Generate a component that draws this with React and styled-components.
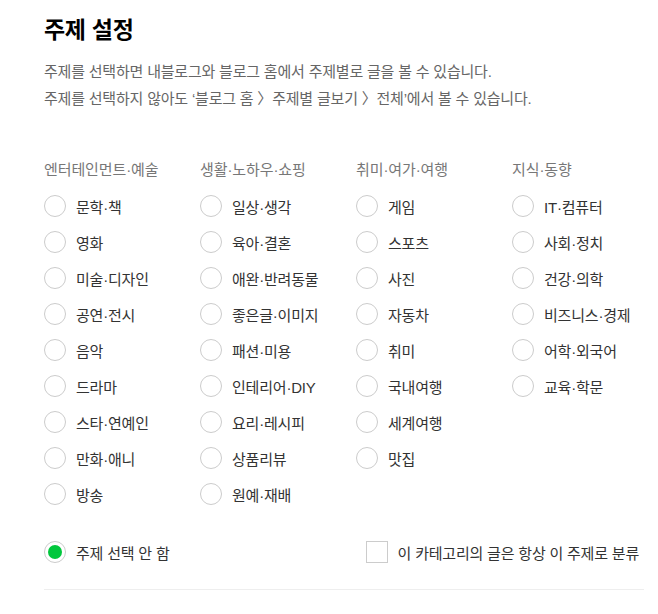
import React from 'react';
import styled, { createGlobalStyle } from 'styled-components';

const GlobalStyle = createGlobalStyle`
  body {
    margin: 0;
    background: #fff;
    font-family: "Liberation Sans", "Noto Sans CJK KR", sans-serif;
  }
`;

const Page = styled.div`
  padding: 15px 0 0 44px;
  width: 600px;
`;

const Title = styled.h2`
  margin: 0;
  font-size: 23px;
  line-height: 30px;
  font-weight: 700;
  color: #000;
  letter-spacing: -0.3px;
`;

const Desc = styled.p`
  margin: 13px 0 0;
  font-size: 15px;
  line-height: 27px;
  color: #666;
  letter-spacing: -0.2px;
`;

const Grid = styled.div`
  display: grid;
  grid-template-columns: repeat(4, 156px);
  margin-top: 48px;
`;

const Column = styled.div`
  display: flex;
  flex-direction: column;
`;

const Heading = styled.div`
  font-size: 15px;
  line-height: 20px;
  color: #777;
  margin-bottom: 8px;
  letter-spacing: -0.1px;
  white-space: nowrap;
`;

const Option = styled.label`
  display: flex;
  align-items: center;
  height: 36px;
  font-size: 15px;
  color: #333;
  letter-spacing: -0.2px;
  white-space: nowrap;
  cursor: pointer;
`;

const Radio = styled.span`
  flex: none;
  width: 22px;
  height: 22px;
  box-sizing: border-box;
  border: 1px solid #ccc;
  border-radius: 50%;
  margin-right: 10px;
  display: flex;
  align-items: center;
  justify-content: center;

  &::after {
    content: '';
    width: 14px;
    height: 14px;
    border-radius: 50%;
    background: ${(p) => (p.$checked ? '#00c73c' : 'transparent')};
  }
`;

const Check = styled.span`
  flex: none;
  width: 22px;
  height: 22px;
  box-sizing: border-box;
  border: 1px solid #ccc;
  margin-right: 10px;
`;

const Bottom = styled.div`
  display: flex;
  align-items: center;
  justify-content: space-between;
  margin-top: 22px;
  padding-right: 5px;
  padding-bottom: 19px;
  border-bottom: 1px solid #eee;
`;

const columns = [
  {
    title: '엔터테인먼트·예술',
    items: ['문학·책', '영화', '미술·디자인', '공연·전시', '음악', '드라마', '스타·연예인', '만화·애니', '방송'],
  },
  {
    title: '생활·노하우·쇼핑',
    items: ['일상·생각', '육아·결혼', '애완·반려동물', '좋은글·이미지', '패션·미용', '인테리어·DIY', '요리·레시피', '상품리뷰', '원예·재배'],
  },
  {
    title: '취미·여가·여행',
    items: ['게임', '스포츠', '사진', '자동차', '취미', '국내여행', '세계여행', '맛집'],
  },
  {
    title: '지식·동향',
    items: ['IT·컴퓨터', '사회·정치', '건강·의학', '비즈니스·경제', '어학·외국어', '교육·학문'],
  },
];

const App = () => {
  return (
    <Page>
      <GlobalStyle />
      <Title>주제 설정</Title>
      <Desc>
        주제를 선택하면 내블로그와 블로그 홈에서 주제별로 글을 볼 수 있습니다.
        <br />
        주제를 선택하지 않아도 ‘블로그 홈 〉주제별 글보기 〉전체’에서 볼 수 있습니다.
      </Desc>
      <Grid>
        {columns.map((col) => (
          <Column key={col.title}>
            <Heading>{col.title}</Heading>
            {col.items.map((item) => (
              <Option key={item}>
                <Radio />
                {item}
              </Option>
            ))}
          </Column>
        ))}
      </Grid>
      <Bottom>
        <Option>
          <Radio $checked />
          주제 선택 안 함
        </Option>
        <Option>
          <Check />
          이 카테고리의 글은 항상 이 주제로 분류
        </Option>
      </Bottom>
    </Page>
  );
};

export default App;
